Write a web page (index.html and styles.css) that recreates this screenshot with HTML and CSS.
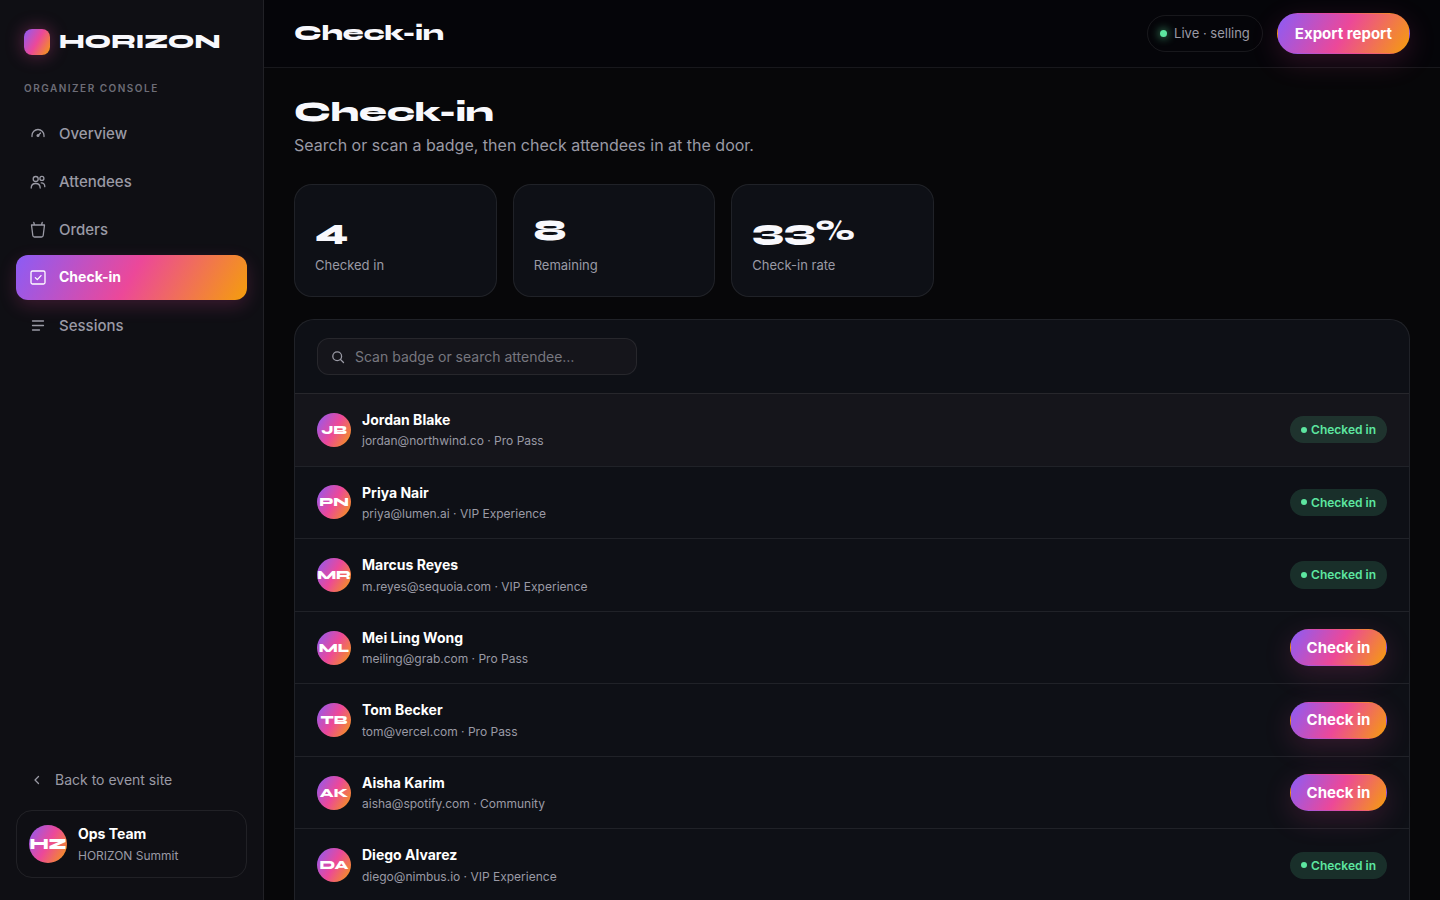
FILE: index.html
```html
<!DOCTYPE html>
<html lang="en">
<head>
<meta charset="utf-8">
<meta name="viewport" content="width=device-width, initial-scale=1">
<title>Check-in · HORIZON</title>
<link rel="stylesheet" href="styles.css">
</head>
<body>
<div class="app">
  <aside class="sidebar">
    <div class="brand"><span class="brand-mark"></span>HORIZON</div>
    <p class="console-label">Organizer console</p>
    <nav class="nav">
      <a class="nav-item" href="#overview">
        <svg class="icon" viewBox="0 0 18 18"><path d="M3 11.500v-1a6 6 0 0 1 12 0v1"/><path d="M9 10.500 11.500 8"/><circle class="fill" cx="9" cy="10.400" r="1.500"/></svg>
        Overview</a>
      <a class="nav-item" href="#attendees">
        <svg class="icon" viewBox="0 0 18 18"><circle cx="6.700" cy="6" r="2.500"/><circle cx="12.900" cy="5.400" r="2"/><path d="M2.200 15c0-2.800 1.900-4.500 4.500-4.500s4.500 1.700 4.500 4.500M12.200 9.800c2.200 0 3.600 1.600 3.600 3.900"/></svg>
        Attendees</a>
      <a class="nav-item" href="#orders">
        <svg class="icon" viewBox="0 0 18 18"><path d="M2.500 4h13l-1.300 10.500a1.700 1.700 0 0 1-1.700 1.500h-7a1.700 1.700 0 0 1-1.700-1.500zM5.500 4 4.800 1.500M12.500 4l.7-2.500"/></svg>
        Orders</a>
      <a class="nav-item active" href="#check-in" aria-current="page">
        <svg class="icon" viewBox="0 0 18 18"><rect x="2" y="2" width="14" height="13" rx="1.500"/><path d="m6.300 8.600 2 2 3.700-4"/></svg>
        Check-in</a>
      <a class="nav-item" href="#sessions">
        <svg class="icon" viewBox="0 0 18 18"><path d="M3.500 4h11M3.500 8.500h11M3.500 13h7"/></svg>
        Sessions</a>
    </nav>
    <div class="sidebar-foot">
      <a class="back" href="#site"><svg class="icon-small" viewBox="0 0 12 12"><path d="M7.500 2.500 4 6l3.500 3.500"/></svg>Back to event site</a>
      <div class="account">
        <span class="avatar avatar-large">HZ</span>
        <div><div class="name">Ops Team</div><div class="meta">HORIZON Summit</div></div>
      </div>
    </div>
  </aside>
  <div class="main">
    <header class="topbar">
      <div class="topbar-title">Check-in</div>
      <div class="topbar-actions">
        <span class="status"><span class="status-dot"></span>Live · selling</span>
        <button class="button button-export" type="button">Export report</button>
      </div>
    </header>
    <main class="content">
      <h1 class="title">Check-in</h1>
      <p class="lead">Search or scan a badge, then check attendees in at the door.</p>
      <section class="stats">
        <div class="stat"><div class="stat-value">4</div><div class="stat-label">Checked in</div></div>
        <div class="stat"><div class="stat-value">8</div><div class="stat-label">Remaining</div></div>
        <div class="stat"><div class="stat-value">33%</div><div class="stat-label">Check-in rate</div></div>
      </section>
      <section class="panel">
        <div class="panel-head">
          <label class="search">
            <svg class="icon-search" viewBox="0 0 14 14"><circle cx="6.200" cy="6.200" r="4.400"/><path d="m9.500 9.500 3 3"/></svg>
            <input class="search-input" type="text" aria-label="Search attendees" placeholder="Scan badge or search attendee…">
          </label>
        </div>
        <ul class="rows">
          <li class="row highlighted"><span class="avatar">JB</span><div class="person"><div class="name">Jordan Blake</div><div class="meta">jordan@northwind.co · Pro Pass</div></div><span class="badge"><span class="badge-dot"></span>Checked in</span></li>
          <li class="row"><span class="avatar">PN</span><div class="person"><div class="name">Priya Nair</div><div class="meta">priya@lumen.ai · VIP Experience</div></div><span class="badge"><span class="badge-dot"></span>Checked in</span></li>
          <li class="row"><span class="avatar">MR</span><div class="person"><div class="name">Marcus Reyes</div><div class="meta">m.reyes@sequoia.com · VIP Experience</div></div><span class="badge"><span class="badge-dot"></span>Checked in</span></li>
          <li class="row"><span class="avatar">ML</span><div class="person"><div class="name">Mei Ling Wong</div><div class="meta">meiling@grab.com · Pro Pass</div></div><button class="button" type="button">Check in</button></li>
          <li class="row"><span class="avatar">TB</span><div class="person"><div class="name">Tom Becker</div><div class="meta">tom@vercel.com · Pro Pass</div></div><button class="button" type="button">Check in</button></li>
          <li class="row"><span class="avatar">AK</span><div class="person"><div class="name">Aisha Karim</div><div class="meta">aisha@spotify.com · Community</div></div><button class="button" type="button">Check in</button></li>
          <li class="row"><span class="avatar">DA</span><div class="person"><div class="name">Diego Alvarez</div><div class="meta">diego@nimbus.io · VIP Experience</div></div><span class="badge"><span class="badge-dot"></span>Checked in</span></li>
        </ul>
      </section>
    </main>
  </div>
</div>
</body>
</html>
```
FILE: styles.css
```css
:root {
  --bg: #070709;
  --sidebar: #0f0f14;
  --card: #0e1016;
  --line: rgba(255, 255, 255, 0.08);
  --text: #f8f8fc;
  --muted: #9a9aa5;
  --dim: #6d6d77;
  --green: #5de6a0;
  --gradient: linear-gradient(120deg, #8b5cf6 0%, #ec4899 50%, #f59e0b 100%);
  --display: Syne, "DejaVu Sans", sans-serif;
}

* { box-sizing: border-box; }

body {
  margin: 0;
  background: var(--bg);
  color: var(--text);
  font-family: Inter, sans-serif;
  font-size: 16px;
  line-height: 1.6;
}

a { color: inherit; text-decoration: none; }

.app {
  display: grid;
  grid-template-columns: 264px 1fr;
  height: 100vh;
}

.sidebar {
  display: flex;
  flex-direction: column;
  padding: 24px 16px 22px;
  background: var(--sidebar);
  border-right: 1px solid var(--line);
}

.brand {
  display: flex;
  align-items: center;
  gap: 9px;
  height: 36px;
  padding: 0 8px;
  font: 800 20px/36px var(--display);
}

.brand-mark {
  flex: none;
  width: 26px;
  height: 26px;
  border-radius: 8px;
  background: var(--gradient);
  box-shadow: 0 0 18px rgba(236, 72, 153, 0.4);
}

.console-label {
  margin: 20px 8px 15px;
  color: var(--dim);
  font-size: 10px;
  font-weight: 600;
  line-height: 16px;
  letter-spacing: 1.5px;
  text-transform: uppercase;
}

.nav {
  display: flex;
  flex-direction: column;
  gap: 3px;
}

.nav-item {
  display: flex;
  align-items: center;
  gap: 12px;
  height: 45px;
  padding: 0 13px;
  border-radius: 12px;
  color: var(--muted);
  font-size: 15px;
  font-weight: 500;
}

.nav-item.active {
  background: var(--gradient);
  color: #fff;
  font-size: 14px;
  font-weight: 700;
  box-shadow: 0 6px 18px rgba(236, 72, 153, 0.2);
}

.icon, .icon-small, .icon-search {
  flex: none;
  fill: none;
  stroke: currentColor;
  stroke-width: 1.3;
  stroke-linecap: round;
  stroke-linejoin: round;
}

.icon { width: 18px; height: 18px; }
.icon .fill { fill: currentColor; stroke: none; }
.icon-small { width: 12px; height: 12px; }
.icon-search { width: 14px; height: 14px; color: var(--muted); }

.sidebar-foot {
  display: flex;
  flex-direction: column;
  gap: 18px;
  margin-top: auto;
}

.back {
  display: flex;
  align-items: center;
  gap: 12px;
  padding-left: 15px;
  color: var(--muted);
  font-size: 14px;
  line-height: 24px;
}

.account {
  display: flex;
  align-items: center;
  gap: 11px;
  height: 68px;
  padding: 0 12px;
  border: 1px solid var(--line);
  border-radius: 16px;
}

.avatar {
  display: grid;
  place-items: center;
  flex: none;
  width: 34px;
  height: 34px;
  border-radius: 50%;
  background: var(--gradient);
  color: #fff;
  font: 800 12px/20px var(--display);
}

.avatar-large {
  width: 38px;
  height: 38px;
  font-size: 15px;
}

.name {
  color: #fff;
  font-size: 14px;
  font-weight: 700;
}

.meta {
  color: var(--muted);
  font-size: 12px;
}

.main {
  min-width: 0;
  overflow-y: auto;
  scrollbar-width: none;
}

.topbar {
  display: flex;
  align-items: center;
  justify-content: space-between;
  height: 68px;
  padding: 0 30px;
  background: #050509;
  border-bottom: 1px solid var(--line);
}

.topbar-title { font: 800 21px/32px var(--display); }

.topbar-actions {
  display: flex;
  align-items: center;
  gap: 14px;
}

.status {
  display: flex;
  align-items: center;
  gap: 7px;
  padding: 7px 12px;
  border: 1px solid var(--line);
  border-radius: 99px;
  color: var(--muted);
  font-size: 13px;
}

.status-dot {
  width: 7px;
  height: 7px;
  border-radius: 50%;
  background: var(--green);
  box-shadow: 0 0 10px var(--green);
}

.button {
  min-width: 97px;
  height: 37px;
  padding: 0 15px;
  border: 1px solid transparent;
  border-radius: 99px;
  background: var(--gradient);
  color: #fff;
  font: 700 15px/24px Inter, sans-serif;
  box-shadow: 0 8px 28px rgba(236, 72, 153, 0.18);
  cursor: pointer;
}

.button-export {
  height: 41px;
  padding: 0 17px;
}

.content { padding: 27px 30px 0; }

.title {
  margin: 0;
  font: 800 28px/34px var(--display);
}

.lead {
  margin: 3px 0 0;
  color: var(--muted);
  line-height: 26px;
}

.stats {
  display: grid;
  grid-template-columns: repeat(3, 1fr);
  gap: 16px;
  max-width: 640px;
  margin-top: 26px;
}

.stat {
  height: 113px;
  padding: 25px 20px 0;
  background: var(--card);
  border: 1px solid var(--line);
  border-radius: 18px;
}

.stat-value { font: 800 30px/40px var(--display); }

.stat-label {
  margin-top: 5px;
  color: var(--muted);
  font-size: 13px;
}

.panel {
  margin-top: 22px;
  padding-bottom: 24px;
  background: var(--card);
  border: 1px solid var(--line);
  border-radius: 20px;
}

.panel-head { padding: 18px 22px; }

.search {
  display: flex;
  align-items: center;
  gap: 10px;
  max-width: 320px;
  height: 37px;
  padding: 0 13px;
  background: #15151b;
  border: 1px solid var(--line);
  border-radius: 12px;
}

.search-input {
  flex: 1;
  min-width: 0;
  padding: 0;
  border: 0;
  outline: 0;
  background: none;
  color: var(--text);
  font: 400 14px/22px Inter, sans-serif;
}

.search-input::placeholder { color: #77777f; opacity: 1; }

.rows {
  margin: 0;
  padding: 0;
  list-style: none;
}

.row {
  display: flex;
  align-items: center;
  gap: 11px;
  padding: 15px 22px;
  border-top: 1px solid var(--line);
}

.row.highlighted { background: #15151b; }

.person { flex: 1; }

.badge {
  display: flex;
  align-items: center;
  gap: 4px;
  padding: 4px 11px;
  border-radius: 99px;
  background: rgba(93, 230, 160, 0.15);
  color: var(--green);
  font-size: 12px;
  font-weight: 600;
}

.badge-dot {
  width: 6px;
  height: 6px;
  border-radius: 50%;
  background: currentColor;
}
```
